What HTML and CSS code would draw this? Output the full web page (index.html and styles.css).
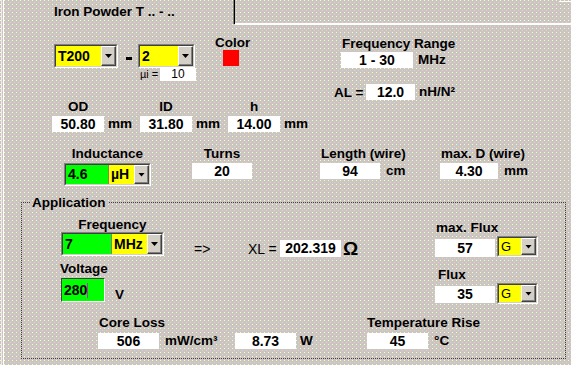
FILE: index.html
```html
<!DOCTYPE html>
<html lang="en">

<head>
    <meta charset="UTF-8">
    <title>Iron Powder Toroid</title>
    <link rel="stylesheet" href="styles.css">
</head>

<body>
    <!-- Tabs -->
    <div class="tabs">
        <div class="tab">Iron Powder T .. - ..</div>
        <div class="tab-rest"><span class="next-tab"></span></div>
    </div>

    <!-- Core selection -->
    <div class="top">
        <div class="core">
            <div class="core-row">
                <div class="combo w64">
                    <div class="combo-in"><span class="cf yellow grow">T200</span><span class="cbtn"></span></div>
                </div>
                <span class="dash"></span>
                <div class="combo w57">
                    <div class="combo-in"><span class="cf yellow grow">2</span><span class="cbtn"></span></div>
                </div>
            </div>
            <div class="mu-row"><span class="mu">µi =</span><span class="box mu-box">10</span></div>
        </div>
        <div class="color">
            <div class="lbl">Color</div>
            <div class="swatch"></div>
        </div>
        <div class="range">
            <div class="lbl range-lbl">Frequency Range</div>
            <div class="line range-line"><span class="box w72">1 - 30</span><span class="unit">MHz</span></div>
            <div class="line al-line"><span class="al">AL =</span><span class="box w49">12.0</span><span class="unit u4">nH/N²</span></div>
        </div>
    </div>

    <!-- Dimensions -->
    <div class="dims">
        <div class="dim">
            <div class="lbl">OD</div>
            <div class="line"><span class="box w52">50.80</span><span class="unit u4">mm</span></div>
        </div>
        <div class="dim">
            <div class="lbl">ID</div>
            <div class="line"><span class="box w52">31.80</span><span class="unit u4">mm</span></div>
        </div>
        <div class="dim">
            <div class="lbl">h</div>
            <div class="line"><span class="box w52">14.00</span><span class="unit u4">mm</span></div>
        </div>
    </div>

    <!-- Winding -->
    <div class="ind">
        <div class="ind-col wide">
            <div class="lbl ind-lbl">Inductance</div>
            <div class="combo ind-combo">
                <div class="combo-in"><span class="cf green ind-green">4.6</span><span class="cf yellow grow">µH</span><span class="cbtn"></span></div>
            </div>
        </div>
        <div class="ind-col wide">
            <div class="lbl turns-lbl">Turns</div>
            <div class="line"><span class="box w60">20</span></div>
        </div>
        <div class="ind-col mid">
            <div class="lbl pl1">Length (wire)</div>
            <div class="line"><span class="box w60">94</span><span class="unit u6">cm</span></div>
        </div>
        <div class="ind-col">
            <div class="lbl pl1">max. D (wire)</div>
            <div class="line"><span class="box w58">4.30</span><span class="unit u6">mm</span></div>
        </div>
    </div>

    <!-- Application -->
    <fieldset class="app">
        <legend>Application</legend>
        <div class="g-main">
            <div class="g-left">
                <div class="freq">
                    <div class="lbl center">Frequency</div>
                    <div class="combo freq-combo">
                        <div class="combo-in"><span class="cf green freq-green">7</span><span class="cf yellow grow">MHz</span><span class="cbtn"></span></div>
                    </div>
                </div>
                <div class="volt">
                    <div class="lbl">Voltage</div>
                    <div class="volt-line">
                        <span class="vbox">280<span class="caret"></span></span>
                        <span class="v-unit">V</span>
                    </div>
                </div>
            </div>
            <div class="g-mid">
                <span class="arrow">=&gt;</span>
                <span class="xl">XL =</span>
                <span class="box w61 tall">202.319</span>
                <span class="ohm">Ω</span>
            </div>
            <div class="g-right">
                <div class="lbl mflux-lbl">max. Flux</div>
                <div class="flux-line">
                    <span class="box w60 h18">57</span>
                    <div class="combo g-combo">
                        <div class="combo-in"><span class="cf yellow grow plain">G</span><span class="cbtn"></span></div>
                    </div>
                </div>
                <div class="lbl flux-lbl">Flux</div>
                <div class="flux-line">
                    <span class="box w60 h17">35</span>
                    <div class="combo g-combo">
                        <div class="combo-in"><span class="cf yellow grow plain">G</span><span class="cbtn"></span></div>
                    </div>
                </div>
            </div>
        </div>
        <div class="g-bottom">
            <div class="loss">
                <div class="lbl pl1">Core Loss</div>
                <div class="line loss-line"><span class="box w61">506</span><span class="unit mw">mW/cm³</span><span class="box w61">8.73</span><span class="unit u4">W</span></div>
            </div>
            <div class="temp">
                <div class="lbl">Temperature Rise</div>
                <div class="line loss-line"><span class="box w61">45</span><span class="unit u6">°C</span></div>
            </div>
        </div>
    </fieldset>
</body>

</html>
```

FILE: styles.css
```css
body {
    margin: 0;
    width: 571px;
    height: 365px;
    overflow: hidden;
    font-family: "Liberation Sans", Arial, sans-serif;
    font-size: 13.5px;
    font-weight: bold;
    color: #000;
    background-color: #c9c5c1;
    background-image:
        linear-gradient(to right, transparent 1px, #ececec 1px, #ececec 2px, transparent 2px, transparent 3px, #fff 3px, #fff 4px, transparent 4px),
        conic-gradient(from 270deg at 1px 1px, #fafac8 0 90deg, transparent 0),
        conic-gradient(from 270deg at 1px 1px, #f2c6cc 0 90deg, transparent 0);
    background-size: 4px 100%, 4px 4px, 4px 4px;
    background-repeat: no-repeat, repeat, repeat;
    background-position: 0 0, 0 0, 2px 2px;
}

/* tabs */
.tabs {
    display: flex;
    height: 25px;
}

.tab {
    width: 235px;
    height: 24px;
    box-sizing: border-box;
    padding: 4px 0 0 54px;
    line-height: 15px;
    border-right: 1px solid #000;
    box-shadow: inset -1px 0 #808080;
}

.tab-rest {
    flex: 1;
    height: 23px;
    border-bottom: 2px solid #fff;
    display: flex;
    justify-content: flex-end;
}

.next-tab {
    width: 12px;
    height: 1px;
    margin-top: 1px;
    background: #fff;
}

/* common */
.lbl {
    line-height: 15px;
    white-space: nowrap;
}

.center {
    text-align: center;
}

.pl1 {
    padding-left: 1px;
}

.line {
    display: flex;
    align-items: center;
}

.box {
    display: block;
    background: #fff;
    text-align: center;
    height: 16px;
    line-height: 16px;
    font-size: 14px;
    white-space: nowrap;
}

.unit {
    margin-left: 5px;
    line-height: 16px;
    white-space: nowrap;
}

.u4 {
    margin-left: 4px;
}

.u6 {
    margin-left: 6px;
}

.w49 { width: 49px; }
.w52 { width: 52px; }
.w58 { width: 58px; }
.w60 { width: 60px; }
.w61 { width: 61px; }
.w72 { width: 72px; }

/* combo boxes */
.combo {
    box-sizing: border-box;
    height: 24px;
    display: flex;
    border: 1px solid;
    border-color: #808080 #fff #fff #808080;
}

.combo-in {
    flex: 1;
    display: flex;
    min-width: 0;
    border: 1px solid;
    border-color: #404040 #d4d0c8 #d4d0c8 #404040;
}

.cf {
    padding-left: 2px;
    font-size: 14px;
    line-height: 20px;
    overflow: hidden;
    white-space: nowrap;
}

.grow {
    flex: 1;
}

.plain {
    font-weight: normal;
    font-size: 13px;
    line-height: 17px;
}

.yellow {
    background: #ff0;
}

.green {
    background: #0f0;
    border-right: 1px solid #808080;
}

.cbtn {
    width: 15px;
    box-sizing: border-box;
    background: #d4d0c8;
    border: 1px solid;
    border-color: #fff #404040 #404040 #fff;
    box-shadow: inset -1px -1px #808080;
    display: flex;
    align-items: center;
    justify-content: center;
}

.cbtn::after {
    content: "";
    width: 7px;
    height: 4px;
    background: #000;
    clip-path: polygon(0 0, 100% 0, 50% 100%);
}

.w64 { width: 64px; }
.w57 { width: 57px; }

/* top section */
.top {
    display: flex;
    align-items: flex-start;
    height: 74px;
}

.core {
    margin: 19px 0 0 54px;
    width: 142px;
}

.core-row {
    display: flex;
    align-items: center;
    height: 24px;
}

.dash {
    width: 6px;
    height: 3px;
    margin: 5px 6px 0 8px;
    background: #000;
}

.mu-row {
    display: flex;
    align-items: center;
    height: 13px;
    padding-left: 86px;
    font-weight: normal;
}

.mu {
    width: 20px;
    font-size: 11px;
    line-height: 13px;
}

.mu-box {
    width: 36px;
    height: 13px;
    line-height: 13px;
    font-size: 12px;
    font-weight: normal;
}

.color {
    margin: 11px 0 0 19px;
    width: 34px;
    text-align: center;
}

.color .lbl {
    line-height: 14px;
}

.swatch {
    width: 16px;
    height: 16px;
    margin-left: 8px;
    background: #f00;
}

.range {
    margin: 11px 0 0 85px;
}

.range-lbl {
    padding-left: 8px;
}

.range-line {
    margin-top: 1px;
    padding-left: 7px;
}

.al-line {
    margin-top: 16px;
}

.al {
    width: 32px;
}

/* dimensions */
.dims {
    display: flex;
    height: 47px;
    padding-left: 52px;
}

.dim {
    width: 88px;
}

.dim .lbl {
    width: 52px;
    text-align: center;
}

.dim .line {
    margin-top: 2px;
}

/* inductance row */
.ind {
    display: flex;
    height: 49px;
    padding-left: 64px;
}

.ind-col.wide {
    width: 128px;
}

.ind-col.mid {
    width: 120px;
}

.ind-col .line {
    margin-top: 2px;
}

.ind-lbl {
    width: 87px;
    text-align: center;
}

.turns-lbl {
    width: 60px;
    text-align: center;
}

.ind-combo {
    width: 87px;
    height: 23px;
    margin-top: 2px;
}

.ind-combo .cf {
    line-height: 19px;
}

.ind-green {
    width: 40px;
}

/* application group */
.app {
    margin: 0 0 0 21px;
    padding: 0;
    width: 545px;
    min-width: 0;
    box-sizing: border-box;
    border: 1px dotted #404040;
}

.app legend {
    margin-left: 8px;
    padding: 0 2px;
    line-height: 15px;
}

.g-main {
    display: flex;
    height: 105px;
}

.g-left {
    margin-left: 38px;
    width: 133px;
}

.freq {
    margin: 7px 0 0 1px;
    width: 103px;
}

.freq-combo {
    width: 103px;
}

.freq-green {
    width: 46px;
}

.volt {
    margin-top: 5px;
}

.volt-line {
    display: flex;
    align-items: flex-end;
    margin-top: 2px;
}

.vbox {
    width: 44px;
    height: 24px;
    margin-left: 1px;
    box-sizing: border-box;
    padding-left: 2px;
    background: #0f0;
    border: 1px solid;
    border-color: #404040 #fff #fff #404040;
    font-size: 14px;
    line-height: 22px;
}

.caret {
    display: inline-block;
    width: 1px;
    height: 15px;
    vertical-align: -3px;
    background: #d020d0;
}

.v-unit {
    margin-left: 10px;
    line-height: 15px;
}

.g-mid {
    width: 241px;
    height: 17px;
    margin-top: 30px;
    display: flex;
    align-items: center;
    font-weight: normal;
}

.arrow {
    width: 54px;
    padding-left: 1px;
    font-size: 14px;
}

.xl {
    width: 32px;
    font-size: 14px;
}

.tall {
    height: 17px;
    line-height: 17px;
    font-weight: bold;
}

.ohm {
    margin-left: 2px;
    font-size: 19px;
    font-weight: bold;
}

.g-right {
    margin-left: 1px;
}

.mflux-lbl {
    margin-top: 10px;
    padding-left: 1px;
}

.flux-lbl {
    margin-top: 10px;
    padding-left: 3px;
}

.flux-line {
    display: flex;
    align-items: flex-start;
    margin-top: 1px;
}

.flux-line .box {
    margin-top: 3px;
}

.h18 {
    height: 18px;
    line-height: 18px;
}

.h17 {
    height: 17px;
    line-height: 17px;
}

.g-combo {
    width: 41px;
    height: 21px;
    margin-left: 2px;
}

.g-bottom {
    display: flex;
    height: 43px;
    padding-left: 76px;
}

.loss {
    width: 269px;
}

.loss-line {
    margin-top: 3px;
}

.unit.mw {
    margin-left: 6px;
    width: 70px;
}
```
